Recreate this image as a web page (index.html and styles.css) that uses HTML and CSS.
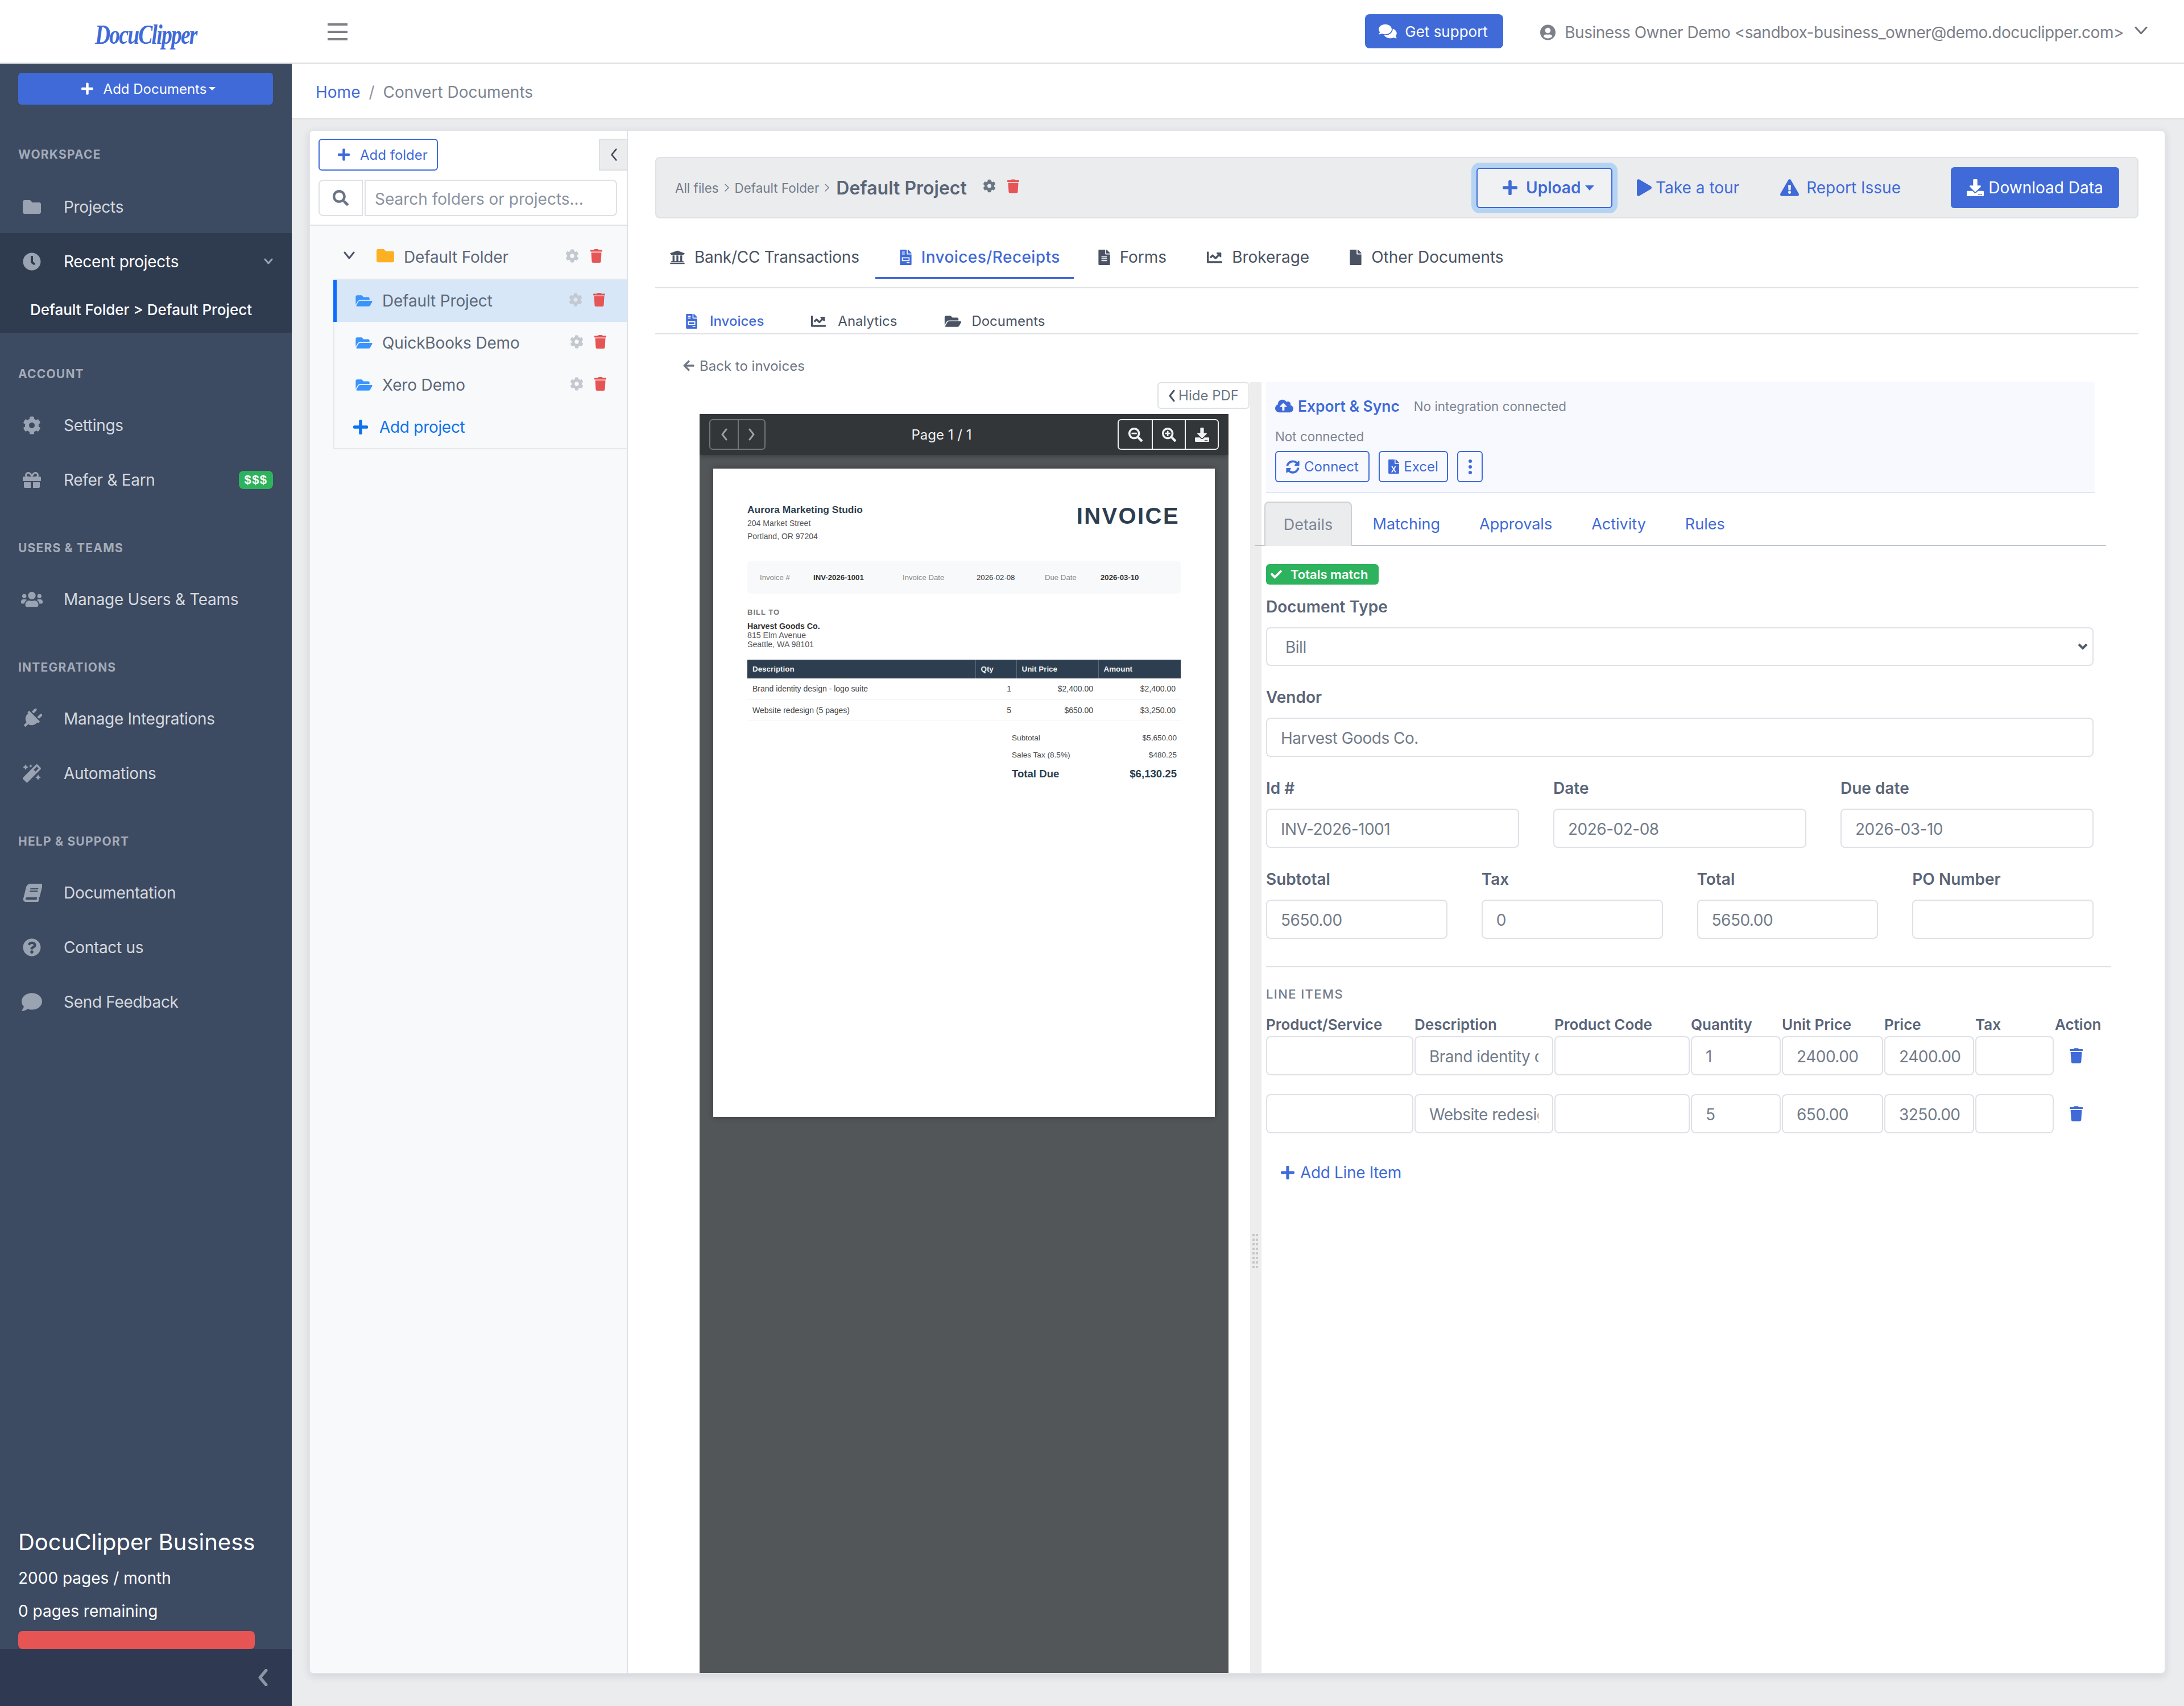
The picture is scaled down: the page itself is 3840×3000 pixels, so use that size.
FILE: index.html
```html
<!DOCTYPE html>
<html lang="en">
<head>
    <meta charset="UTF-8">
    <meta name="viewport" content="width=device-width, initial-scale=1.0">
    <title>DocuClipper - Convert Documents</title>
    <link rel="stylesheet" href="styles.css">
</head>
<body>
    <svg class="sprite" xmlns="http://www.w3.org/2000/svg">
        <symbol id="i-folder" viewBox="0 0 512 512"><path d="M464 128H272l-64-64H48C21.49 64 0 85.49 0 112v288c0 26.51 21.49 48 48 48h416c26.51 0 48-21.49 48-48V176c0-26.51-21.49-48-48-48z"/></symbol>
        <symbol id="i-folder-open" viewBox="0 0 576 512"><path d="M572.694 292.093L500.27 416.248A63.997 63.997 0 0 1 444.989 448H45.025c-18.523 0-30.064-20.093-20.731-36.093l72.424-124.155A64 64 0 0 1 152 256h399.964c18.523 0 30.064 20.093 20.73 36.093zM152 224h328v-48c0-26.51-21.49-48-48-48H272l-64-64H48C21.49 64 0 85.49 0 112v278.046l69.077-118.418C86.214 242.25 117.989 224 152 224z"/></symbol>
        <symbol id="i-trash" viewBox="0 0 448 512"><path d="M432 32H312l-9.4-18.7A24 24 0 0 0 281.1 0H166.8a23.72 23.72 0 0 0-21.4 13.3L136 32H16A16 16 0 0 0 0 48v32a16 16 0 0 0 16 16h416a16 16 0 0 0 16-16V48a16 16 0 0 0-16-16zM53.2 467a48 48 0 0 0 47.9 45h245.8a48 48 0 0 0 47.9-45L416 128H32z"/></symbol>
        <symbol id="i-cog" viewBox="0 0 512 512"><path d="M487.4 315.7l-42.6-24.6c4.3-23.2 4.3-47 0-70.2l42.6-24.6c4.9-2.8 7.1-8.6 5.5-14-11.1-35.6-30-67.8-54.7-94.6-3.8-4.1-10-5.1-14.8-2.3L380.8 110c-17.9-15.4-38.5-27.3-60.8-35.1V25.8c0-5.6-3.9-10.5-9.4-11.7-36.7-8.2-74.3-7.8-109.2 0-5.5 1.2-9.4 6.1-9.4 11.7V75c-22.2 7.9-42.8 19.8-60.8 35.1L88.7 85.5c-4.9-2.8-11-1.9-14.8 2.3-24.7 26.7-43.6 58.9-54.7 94.6-1.7 5.4.6 11.2 5.5 14L67.3 221c-4.3 23.2-4.3 47 0 70.2l-42.6 24.6c-4.9 2.8-7.1 8.6-5.5 14 11.1 35.6 30 67.8 54.7 94.6 3.8 4.1 10 5.1 14.8 2.3l42.6-24.6c17.9 15.4 38.5 27.3 60.8 35.1v49.2c0 5.6 3.9 10.5 9.4 11.7 36.7 8.2 74.3 7.8 109.2 0 5.5-1.2 9.4-6.1 9.4-11.7v-49.2c22.2-7.9 42.8-19.8 60.8-35.1l42.6 24.6c4.9 2.8 11 1.9 14.8-2.3 24.7-26.7 43.6-58.9 54.7-94.6 1.5-5.5-.7-11.3-5.6-14.1zM256 336c-44.1 0-80-35.9-80-80s35.9-80 80-80 80 35.9 80 80-35.9 80-80 80z"/></symbol>
        <symbol id="i-search" viewBox="0 0 512 512"><path d="M505 442.7L405.3 343c-4.5-4.5-10.6-7-17-7H372c27.6-35.3 44-79.7 44-128C416 93.1 322.9 0 208 0S0 93.1 0 208s93.1 208 208 208c48.3 0 92.7-16.4 128-44v16.3c0 6.4 2.5 12.5 7 17l99.7 99.7c9.4 9.4 24.6 9.4 33.9 0l28.3-28.3c9.4-9.4 9.4-24.6.1-34zM208 336c-70.7 0-128-57.2-128-128 0-70.7 57.2-128 128-128 70.7 0 128 57.2 128 128 0 70.7-57.2 128-128 128z"/></symbol>
        <symbol id="i-plus" viewBox="0 0 448 512"><path d="M416 208H272V64c0-17.67-14.33-32-32-32h-32c-17.67 0-32 14.33-32 32v144H32c-17.67 0-32 14.33-32 32v32c0 17.67 14.33 32 32 32h144v144c0 17.67 14.33 32 32 32h32c17.67 0 32-14.33 32-32V304h144c17.67 0 32-14.33 32-32v-32c0-17.67-14.33-32-32-32z"/></symbol>
        <symbol id="i-file" viewBox="0 0 384 512"><path d="M224 136V0H24C10.7 0 0 10.7 0 24v464c0 13.3 10.7 24 24 24h336c13.3 0 24-10.7 24-24V160H248c-13.2 0-24-10.8-24-24zm160-14.1v6.1H256V0h6.1c6.4 0 12.5 2.5 17 7l97.9 98c4.5 4.5 7 10.6 7 16.9z"/></symbol>
        <symbol id="i-file-alt" viewBox="0 0 384 512"><path d="M224 136V0H24C10.7 0 0 10.7 0 24v464c0 13.3 10.7 24 24 24h336c13.3 0 24-10.7 24-24V160H248c-13.2 0-24-10.8-24-24zm64 236c0 6.6-5.4 12-12 12H108c-6.6 0-12-5.4-12-12v-8c0-6.6 5.4-12 12-12h168c6.6 0 12 5.4 12 12v8zm0-64c0 6.6-5.4 12-12 12H108c-6.6 0-12-5.4-12-12v-8c0-6.6 5.4-12 12-12h168c6.6 0 12 5.4 12 12v8zm0-72v8c0 6.6-5.4 12-12 12H108c-6.6 0-12-5.4-12-12v-8c0-6.6 5.4-12 12-12h168c6.6 0 12 5.4 12 12zm96-114.1v6.1H256V0h6.1c6.4 0 12.5 2.5 17 7l97.9 98c4.5 4.5 7 10.6 7 16.9z"/></symbol>
        <symbol id="i-file-invoice" viewBox="0 0 384 512"><path fill-rule="evenodd" d="M224 136V0H24C10.7 0 0 10.7 0 24v464c0 13.3 10.7 24 24 24h336c13.3 0 24-10.7 24-24V160H248c-13.2 0-24-10.8-24-24zM64 64h96v32H64zm0 64h96v32H64zm0 128h256v128H64zm32 32v64h192v-64zM224 416h96v32h-96zM384 121.9v6.1H256V0h6.1c6.4 0 12.5 2.5 17 7l97.9 98c4.5 4.5 7 10.6 7 16.9z"/></symbol>
        <symbol id="i-file-excel" viewBox="0 0 384 512"><path fill-rule="evenodd" d="M224 136V0H24C10.7 0 0 10.7 0 24v464c0 13.3 10.7 24 24 24h336c13.3 0 24-10.7 24-24V160H248c-13.2 0-24-10.8-24-24zm60 100h-46l-46 78-46-78h-46l68 112-68 112h46l46-78 46 78h46l-68-112zM384 121.9v6.1H256V0h6.1c6.4 0 12.5 2.5 17 7l97.9 98c4.5 4.5 7 10.6 7 16.9z"/></symbol>
        <symbol id="i-chart" viewBox="0 0 512 512"><path d="M496 384H64V80c0-8.84-7.16-16-16-16H16C7.16 64 0 71.16 0 80v336c0 17.67 14.33 32 32 32h464c8.84 0 16-7.16 16-16v-32c0-8.84-7.16-16-16-16zM464 96H345.94c-21.38 0-32.09 25.85-16.97 40.97l32.4 32.4L288 242.75l-73.37-73.37c-12.5-12.5-32.76-12.5-45.25 0l-68.69 68.69c-6.25 6.25-6.25 16.38 0 22.63l22.62 22.62c6.25 6.25 16.38 6.25 22.63 0L192 237.25l73.37 73.37c12.5 12.5 32.76 12.5 45.25 0l96-96 32.4 32.4c15.12 15.12 40.97 4.41 40.97-16.97V112c.01-8.84-7.15-16-15.99-16z"/></symbol>
        <symbol id="i-bank" viewBox="0 0 512 512"><path d="M496 128v16a8 8 0 0 1-8 8h-24v12c0 6.627-5.373 12-12 12H60c-6.627 0-12-5.373-12-12v-12H24a8 8 0 0 1-8-8v-16a8 8 0 0 1 4.941-7.392l232-88a7.996 7.996 0 0 1 6.118 0l232 88A8 8 0 0 1 496 128zm-24 304H40c-13.255 0-24 10.745-24 24v16a8 8 0 0 0 8 8h464a8 8 0 0 0 8-8v-16c0-13.255-10.745-24-24-24zM96 192v192H60c-6.627 0-12 5.373-12 12v20h416v-20c0-6.627-5.373-12-12-12h-36V192h-64v192h-64V192h-64v192h-64V192H96z"/></symbol>
        <symbol id="i-clock" viewBox="0 0 512 512"><path d="M256,8C119,8,8,119,8,256S119,504,256,504,504,393,504,256,393,8,256,8Zm92.49,313h0l-20,25a16,16,0,0,1-22.49,2.5h0l-67-49.72a40,40,0,0,1-15-31.23V112a16,16,0,0,1,16-16h32a16,16,0,0,1,16,16V256l58,42.5A16,16,0,0,1,348.49,321Z"/></symbol>
        <symbol id="i-question" viewBox="0 0 512 512"><path d="M504 256c0 136.997-111.043 248-248 248S8 392.997 8 256C8 119.083 119.043 8 256 8s248 111.083 248 248zM262.655 90c-54.497 0-89.255 22.957-116.549 63.758-3.536 5.286-2.353 12.415 2.715 16.258l34.699 26.31c5.205 3.947 12.621 3.008 16.665-2.122 17.864-22.658 30.113-35.797 57.303-35.797 20.429 0 45.698 13.148 45.698 32.958 0 14.976-12.363 22.667-32.534 33.976C247.128 238.528 216 254.941 216 296v4c0 6.627 5.373 12 12 12h56c6.627 0 12-5.373 12-12v-1.333c0-28.462 83.186-29.647 83.186-106.667 0-58.002-60.165-102-116.531-102zM256 338c-25.365 0-46 20.635-46 46 0 25.364 20.635 46 46 46s46-20.636 46-46c0-25.365-20.635-46-46-46z"/></symbol>
        <symbol id="i-comment" viewBox="0 0 512 512"><path d="M256 32C114.6 32 0 125.1 0 240c0 49.6 21.4 95 57 130.7C44.5 421.1 2.7 466 2.2 466.5c-2.2 2.3-2.8 5.7-1.5 8.7S4.8 480 8 480c66.3 0 116-31.8 140.6-51.4 32.7 12.3 69 19.4 107.4 19.4 141.4 0 256-93.1 256-208S397.4 32 256 32z"/></symbol>
        <symbol id="i-comments" viewBox="0 0 576 512"><path d="M416 192c0-88.4-93.1-160-208-160S0 103.6 0 192c0 34.3 14.1 65.9 38 92-13.4 30.2-35.5 54.2-35.8 54.5-2.2 2.3-2.8 5.7-1.5 8.7S4.8 352 8 352c36.6 0 66.9-12.3 88.7-25 32.2 15.7 70.3 25 111.3 25 114.9 0 208-71.6 208-160zm122 220c23.9-26 38-57.7 38-92 0-66.9-53.5-124.2-129.3-148.1.9 6.6 1.3 13.3 1.3 20.1 0 105.9-107.7 192-240 192-10.8 0-21.3-.8-31.7-1.9C207.8 439.6 281.8 480 368 480c41 0 79.1-9.2 111.3-25 21.8 12.7 52.1 25 88.7 25 3.2 0 6.1-1.9 7.3-4.8 1.3-2.9.7-6.3-1.5-8.7-.3-.3-22.4-24.2-35.8-54.5z"/></symbol>
        <symbol id="i-check" viewBox="0 0 512 512"><path d="M173.898 439.404l-166.4-166.4c-9.997-9.997-9.997-26.206 0-36.204l36.203-36.204c9.997-9.998 26.207-9.998 36.204 0L192 312.69 432.095 72.596c9.997-9.997 26.207-9.997 36.204 0l36.203 36.204c9.997 9.997 9.997 26.206 0 36.204l-294.4 294.401c-9.998 9.997-26.207 9.997-36.204-.001z"/></symbol>
        <symbol id="i-user" viewBox="0 0 496 512"><path d="M248 8C111 8 0 119 0 256s111 248 248 248 248-111 248-248S385 8 248 8zm0 96c48.6 0 88 39.4 88 88s-39.4 88-88 88-88-39.4-88-88 39.4-88 88-88zm0 344c-58.7 0-111.3-26.6-146.5-68.2 18.8-35.4 55.6-59.8 98.5-59.8 2.4 0 4.8.4 7.1 1.1 13 4.2 26.6 6.9 40.9 6.9 14.3 0 28-2.7 40.9-6.9 2.3-.7 4.7-1.1 7.1-1.1 42.9 0 79.7 24.4 98.5 59.8C359.3 421.4 306.7 448 248 448z"/></symbol>
        <symbol id="i-download" viewBox="0 0 512 512"><path d="M216 0h80c13.3 0 24 10.7 24 24v168h87.7c17.8 0 26.7 21.5 14.1 34.1L269.7 378.3c-7.5 7.5-19.8 7.5-27.3 0L90.1 226.1c-12.6-12.6-3.7-34.1 14.1-34.1H192V24c0-13.3 10.7-24 24-24zm296 376v112c0 13.3-10.7 24-24 24H24c-13.3 0-24-10.7-24-24V376c0-13.3 10.7-24 24-24h146.7l49 49c20.1 20.1 52.5 20.1 72.6 0l49-49H488c13.3 0 24 10.7 24 24zm-124 88c0-11-9-20-20-20s-20 9-20 20 9 20 20 20 20-9 20-20zm64 0c0-11-9-20-20-20s-20 9-20 20 9 20 20 20 20-9 20-20z"/></symbol>
        <symbol id="i-warning" viewBox="0 0 576 512"><path d="M569.517 440.013C587.975 472.007 564.806 512 527.94 512H48.054c-36.937 0-59.999-40.055-41.577-71.987L246.423 24c18.467-32.009 64.72-31.951 83.154 0l239.94 416.013zM288 354c-25.405 0-46 20.595-46 46s20.595 46 46 46 46-20.595 46-46-20.595-46-46-46zm-43.673-165.346l7.418 136c.347 6.364 5.609 11.346 11.982 11.346h48.546c6.373 0 11.635-4.982 11.982-11.346l7.418-136c.375-6.874-5.098-12.654-11.982-12.654h-63.383c-6.884 0-12.356 5.78-11.981 12.654z"/></symbol>
        <symbol id="i-play" viewBox="0 0 448 512"><path d="M424.4 214.7L72.4 6.6C43.8-10.3 0 6.1 0 47.9V464c0 37.5 40.7 60.1 72.4 41.3l352-208c31.4-18.5 31.5-64.1 0-82.6z"/></symbol>
        <symbol id="i-cloud" viewBox="0 0 640 512"><path d="M537.6 226.6c4.1-10.7 6.4-22.4 6.4-34.6 0-53-43-96-96-96-19.7 0-38.1 6-53.3 16.2C367 64.2 315.3 32 256 32c-88.4 0-160 71.6-160 160 0 2.7.1 5.4.2 8.1C40.2 219.8 0 273.2 0 336c0 79.5 64.5 144 144 144h368c70.7 0 128-57.3 128-128 0-61.9-44-113.6-102.4-125.4zM393.4 288H328v112c0 8.8-7.2 16-16 16h-48c-8.8 0-16-7.2-16-16V288h-65.4c-14.3 0-21.4-17.2-11.3-27.3l105.4-105.4c6.2-6.2 16.4-6.2 22.6 0l105.4 105.4c10.1 10.1 2.9 27.3-11.3 27.3z"/></symbol>
        <symbol id="i-sync" viewBox="0 0 512 512"><path d="M370.72 133.28C339.458 104.008 298.888 87.962 255.848 88c-77.458.068-144.328 53.178-162.791 126.85-1.344 5.363-6.122 9.15-11.651 9.15H24.103c-7.498 0-13.194-6.807-11.807-14.176C33.933 94.924 134.813 8 256 8c66.448 0 126.791 26.136 171.315 68.685L463.03 40.97C478.149 25.851 504 36.559 504 57.941V192c0 13.255-10.745 24-24 24H345.941c-21.382 0-32.09-25.851-16.971-40.971l41.75-41.749zM32 296h134.059c21.382 0 32.09 25.851 16.971 40.971l-41.75 41.75c31.262 29.273 71.835 45.319 114.876 45.28 77.418-.07 144.315-53.144 162.787-126.849 1.344-5.363 6.122-9.15 11.651-9.15h57.304c7.498 0 13.194 6.807 11.807 14.176C478.067 417.076 377.187 504 256 504c-66.448 0-126.791-26.136-171.315-68.685L48.97 471.03C33.851 486.149 8 475.441 8 454.059V320c0-13.255 10.745-24 24-24z"/></symbol>
        <symbol id="i-gift" viewBox="0 0 512 512"><path d="M32 448c0 17.7 14.3 32 32 32h160V320H32v128zm256 32h160c17.7 0 32-14.3 32-32V320H288v160zm192-320h-42.1c6.2-12.1 10.1-25.5 10.1-40 0-48.5-39.5-88-88-88-41.6 0-68.5 21.3-103 68.3-34.5-47-61.4-68.3-103-68.3-48.5 0-88 39.5-88 88 0 14.5 3.8 27.9 10.1 40H32c-17.7 0-32 14.3-32 32v80c0 8.8 7.2 16 16 16h480c8.8 0 16-7.2 16-16v-80c0-17.7-14.3-32-32-32zm-326.1 0c-22.1 0-40-17.9-40-40s17.9-40 40-40c19.9 0 34.6 3.3 86.1 80h-86.1zm206.1 0h-86.1c51.4-76.5 65.7-80 86.1-80 22.1 0 40 17.9 40 40s-17.9 40-40 40z"/></symbol>
        <symbol id="i-users" viewBox="0 0 640 512"><path d="M96 224c35.3 0 64-28.7 64-64s-28.7-64-64-64-64 28.7-64 64 28.7 64 64 64zm448 0c35.3 0 64-28.7 64-64s-28.7-64-64-64-64 28.7-64 64 28.7 64 64 64zm32 32h-64c-17.6 0-33.5 7.1-45.1 18.6 40.3 22.1 68.9 62 75.1 109.4h66c17.7 0 32-14.3 32-32v-32c0-35.3-28.7-64-64-64zm-256 0c61.9 0 112-50.1 112-112S381.9 32 320 32 208 82.1 208 144s50.1 112 112 112zm76.8 32h-8.3c-20.8 10-43.9 16-68.5 16s-47.6-6-68.5-16h-8.3C179.6 288 128 339.6 128 403.2V432c0 26.5 21.5 48 48 48h288c26.5 0 48-21.5 48-48v-28.8c0-63.6-51.6-115.2-115.2-115.2zm-223.7-13.4C161.5 263.1 145.6 256 128 256H64c-35.3 0-64 28.7-64 64v32c0 17.7 14.3 32 32 32h65.9c6.3-47.4 34.9-87.3 75.2-109.4z"/></symbol>
        <symbol id="i-plug" viewBox="0 0 512 512"><g transform="rotate(45 256 256) translate(64 0)"><path d="M320,32a32,32,0,0,0-64,0v96h64Zm48,128H16A16,16,0,0,0,0,176v32a16,16,0,0,0,16,16H32v32A160.07,160.07,0,0,0,160,412.8V512h64V412.8A160.07,160.07,0,0,0,352,256V224h16a16,16,0,0,0,16-16V176A16,16,0,0,0,368,160ZM128,32a32,32,0,0,0-64,0v96h64Z"/></g></symbol>
        <symbol id="i-magic" viewBox="0 0 512 512"><path d="M224 96l16-32 32-16-32-16-16-32-16 32-32 16 32 16 16 32zM80 160l26.66-53.33L160 80l-53.34-26.67L80 0 53.34 53.33 0 80l53.34 26.67L80 160zm352 128l-26.66 53.33L352 368l53.34 26.67L432 448l26.66-53.33L512 368l-53.34-26.67L432 288zm70.62-193.77L417.77 9.38C411.53 3.12 403.34 0 395.15 0c-8.19 0-16.38 3.12-22.63 9.38L9.38 372.52c-12.5 12.5-12.5 32.76 0 45.25l84.85 84.85c6.25 6.25 14.44 9.37 22.62 9.37 8.19 0 16.38-3.12 22.63-9.37l363.14-363.15c12.5-12.48 12.5-32.75 0-45.24zM359.45 203.46l-50.91-50.91 86.6-86.6 50.91 50.91-86.6 86.6z"/></symbol>
        <symbol id="i-book" viewBox="0 0 512 512"><g transform="translate(120 0) skewX(-14)"><path d="M448 360V24c0-13.3-10.7-24-24-24H96C43 0 0 43 0 96v320c0 53 43 96 96 96h328c13.3 0 24-10.7 24-24v-16c0-7.5-3.5-14.3-8.9-18.7-4.2-15.4-4.2-59.3 0-74.7 5.4-4.3 8.9-11.1 8.9-18.6zM128 134c0-3.3 2.7-6 6-6h212c3.3 0 6 2.7 6 6v20c0 3.3-2.7 6-6 6H134c-3.3 0-6-2.7-6-6v-20zm0 64c0-3.3 2.7-6 6-6h212c3.3 0 6 2.7 6 6v20c0 3.3-2.7 6-6 6H134c-3.3 0-6-2.7-6-6v-20zm253.4 250H96c-17.7 0-32-14.3-32-32 0-17.6 14.4-32 32-32h285.4c-1.9 17.1-1.9 46.9 0 64z"/></g></symbol>
        <symbol id="i-arrow-left" viewBox="0 0 448 512"><path d="M257.5 445.1l-22.2 22.2c-9.4 9.4-24.6 9.4-33.9 0L7 273c-9.4-9.4-9.4-24.6 0-33.9L201.4 44.7c9.4-9.4 24.6-9.4 33.9 0l22.2 22.2c9.5 9.5 9.3 25-.4 34.3L136.6 216H424c13.3 0 24 10.7 24 24v32c0 13.3-10.7 24-24 24H136.6l120.5 114.8c9.8 9.3 10 24.8.4 34.3z"/></symbol>
        <symbol id="i-zoom-out" viewBox="0 0 512 512"><path d="M304 192v32c0 6.6-5.4 12-12 12H124c-6.6 0-12-5.4-12-12v-32c0-6.6 5.4-12 12-12h168c6.6 0 12 5.4 12 12zm201 284.7L476.7 505c-9.4 9.4-24.6 9.4-33.9 0L343 405.3c-4.5-4.5-7-10.6-7-17V372c-35.3 27.6-79.7 44-128 44C93.1 416 0 322.9 0 208S93.1 0 208 0s208 93.1 208 208c0 48.3-16.4 92.7-44 128h16.3c6.4 0 12.5 2.5 17 7l99.7 99.7c9.3 9.4 9.3 24.6 0 34zM344 208c0-75.2-60.8-136-136-136S72 132.8 72 208s60.8 136 136 136 136-60.8 136-136z"/></symbol>
        <symbol id="i-zoom-in" viewBox="0 0 512 512"><path d="M304 192v32c0 6.6-5.4 12-12 12h-56v56c0 6.6-5.4 12-12 12h-32c-6.6 0-12-5.4-12-12v-56h-56c-6.6 0-12-5.4-12-12v-32c0-6.6 5.4-12 12-12h56v-56c0-6.6 5.4-12 12-12h32c6.6 0 12 5.4 12 12v56h56c6.6 0 12 5.4 12 12zm201 284.7L476.7 505c-9.4 9.4-24.6 9.4-33.9 0L343 405.3c-4.5-4.5-7-10.6-7-17V372c-35.3 27.6-79.7 44-128 44C93.1 416 0 322.9 0 208S93.1 0 208 0s208 93.1 208 208c0 48.3-16.4 92.7-44 128h16.3c6.4 0 12.5 2.5 17 7l99.7 99.7c9.3 9.4 9.3 24.6 0 34zM344 208c0-75.2-60.8-136-136-136S72 132.8 72 208s60.8 136 136 136 136-60.8 136-136z"/></symbol>
    </svg>

    <header class="topbar">
        <div class="logo-box"><span class="logo">DocuClipper</span></div>
        <div class="hamburger"><span></span><span></span><span></span></div>
        <div class="topbar-right">
            <a class="btn-support"><svg class="icon-support"><use href="#i-comments"/></svg>Get support</a>
            <div class="user-menu">
                <svg class="icon-user"><use href="#i-user"/></svg>
                <span>Business Owner Demo &lt;sandbox-business_owner@demo.docuclipper.com&gt;</span>
                <svg class="chev-user" viewBox="0 0 24 16"><polyline points="2,2 12,13 22,2"/></svg>
            </div>
        </div>
    </header>

    <div class="layout">
        <aside class="sidebar">
            <a class="btn-add-docs"><svg class="icon-plus-sm"><use href="#i-plus"/></svg>Add Documents<span class="caret"></span></a>

            <div class="side-label side-label-first">WORKSPACE</div>
            <a class="side-item side-item-first"><svg class="side-icon"><use href="#i-folder"/></svg>Projects</a>
            <div class="side-recent">
                <a class="side-item side-item-open"><svg class="side-icon"><use href="#i-clock"/></svg>Recent projects
                    <svg class="side-chev" viewBox="0 0 16 12"><polyline points="2,2 8,9 14,2"/></svg>
                </a>
                <div class="side-sub">Default Folder &gt; Default Project</div>
            </div>

            <div class="side-label">ACCOUNT</div>
            <a class="side-item"><svg class="side-icon"><use href="#i-cog"/></svg>Settings</a>
            <a class="side-item"><svg class="side-icon"><use href="#i-gift"/></svg>Refer &amp; Earn<span class="badge-money">$$$</span></a>

            <div class="side-label">USERS &amp; TEAMS</div>
            <a class="side-item"><svg class="side-icon side-icon-lg"><use href="#i-users"/></svg>Manage Users &amp; Teams</a>

            <div class="side-label">INTEGRATIONS</div>
            <a class="side-item"><svg class="side-icon side-icon-lg"><use href="#i-plug"/></svg>Manage Integrations</a>
            <a class="side-item"><svg class="side-icon"><use href="#i-magic"/></svg>Automations</a>

            <div class="side-label">HELP &amp; SUPPORT</div>
            <a class="side-item"><svg class="side-icon"><use href="#i-book"/></svg>Documentation</a>
            <a class="side-item"><svg class="side-icon"><use href="#i-question"/></svg>Contact us</a>
            <a class="side-item"><svg class="side-icon side-icon-lg"><use href="#i-comment"/></svg>Send Feedback</a>

            <div class="plan">
                <div class="plan-name">DocuClipper Business</div>
                <div class="plan-pages">2000 pages / month</div>
                <div class="plan-left">0 pages remaining</div>
                <div class="plan-bar"></div>
            </div>
            <div class="side-footer">
                <svg class="side-collapse" viewBox="0 0 16 28"><polyline points="13,2 3,14 13,26"/></svg>
            </div>
        </aside>

        <main class="main">
            <nav class="crumbs"><a class="crumb-link">Home</a><span class="crumb-sep">/</span><span>Convert Documents</span></nav>

            <section class="card">
                <div class="tree-pane">
                    <div class="tree-head">
                        <div class="tree-actions">
                            <a class="btn-add-folder"><svg class="icon-plus-sm"><use href="#i-plus"/></svg>Add folder</a>
                            <a class="btn-collapse"><svg viewBox="0 0 16 28"><polyline points="13,3 4,14 13,25"/></svg></a>
                        </div>
                        <div class="search-group">
                            <span class="search-addon"><svg><use href="#i-search"/></svg></span>
                            <input class="search-input" type="text" placeholder="Search folders or projects...">
                        </div>
                    </div>
                    <div class="tree-body">
                        <div class="tree-folder">
                            <svg class="tree-chev" viewBox="0 0 20 14"><polyline points="2,2 10,12 18,2"/></svg>
                            <svg class="tree-folder-icon"><use href="#i-folder"/></svg>
                            <span class="tree-name">Default Folder</span>
                            <svg class="tree-gear"><use href="#i-cog"/></svg>
                            <svg class="tree-trash"><use href="#i-trash"/></svg>
                        </div>
                        <div class="tree-list">
                            <div class="tree-row tree-row-active">
                                <svg class="tree-open-icon"><use href="#i-folder-open"/></svg>
                                <span class="tree-name">Default Project</span>
                                <svg class="tree-gear"><use href="#i-cog"/></svg>
                                <svg class="tree-trash"><use href="#i-trash"/></svg>
                            </div>
                            <div class="tree-row">
                                <svg class="tree-open-icon"><use href="#i-folder-open"/></svg>
                                <span class="tree-name">QuickBooks Demo</span>
                                <svg class="tree-gear"><use href="#i-cog"/></svg>
                                <svg class="tree-trash"><use href="#i-trash"/></svg>
                            </div>
                            <div class="tree-row">
                                <svg class="tree-open-icon"><use href="#i-folder-open"/></svg>
                                <span class="tree-name">Xero Demo</span>
                                <svg class="tree-gear"><use href="#i-cog"/></svg>
                                <svg class="tree-trash"><use href="#i-trash"/></svg>
                            </div>
                            <div class="tree-row tree-add"><svg class="tree-add-icon"><use href="#i-plus"/></svg>Add project</div>
                        </div>
                    </div>
                </div>

                <div class="work-pane">
                    <div class="project-bar">
                        <span class="path">All files</span>
                        <svg class="path-sep" viewBox="0 0 8 14"><polyline points="1,1 7,7 1,13"/></svg>
                        <span class="path">Default Folder</span>
                        <svg class="path-sep" viewBox="0 0 8 14"><polyline points="1,1 7,7 1,13"/></svg>
                        <span class="project-name">Default Project</span>
                        <svg class="project-gear"><use href="#i-cog"/></svg>
                        <svg class="project-trash"><use href="#i-trash"/></svg>
                        <a class="btn-upload"><svg class="icon-plus-md"><use href="#i-plus"/></svg>Upload<span class="caret"></span></a>
                        <a class="bar-link bar-tour"><svg class="icon-play"><use href="#i-play"/></svg>Take a tour</a>
                        <a class="bar-link bar-report"><svg class="icon-warn"><use href="#i-warning"/></svg>Report Issue</a>
                        <a class="btn-download"><svg class="icon-dl"><use href="#i-download"/></svg>Download Data</a>
                    </div>

                    <div class="tabs">
                        <a class="tab tab-first"><svg class="tab-icon icon-bank"><use href="#i-bank"/></svg>Bank/CC Transactions</a>
                        <a class="tab tab-active"><svg class="tab-icon icon-file"><use href="#i-file-invoice"/></svg>Invoices/Receipts</a>
                        <a class="tab"><svg class="tab-icon icon-file"><use href="#i-file-alt"/></svg>Forms</a>
                        <a class="tab"><svg class="tab-icon icon-chart"><use href="#i-chart"/></svg>Brokerage</a>
                        <a class="tab"><svg class="tab-icon icon-file"><use href="#i-file"/></svg>Other Documents</a>
                    </div>

                    <div class="subtabs">
                        <a class="subtab subtab-active"><svg class="sub-file"><use href="#i-file-invoice"/></svg>Invoices</a>
                        <a class="subtab"><svg class="sub-chart"><use href="#i-chart"/></svg>Analytics</a>
                        <a class="subtab"><svg class="sub-folder"><use href="#i-folder-open"/></svg>Documents</a>
                    </div>

                    <a class="back-link"><svg><use href="#i-arrow-left"/></svg>Back to invoices</a>

                    <div class="split">
                        <div class="pdf-col">
                            <a class="btn-hide-pdf"><svg viewBox="0 0 12 22"><polyline points="10,2 3,11 10,20"/></svg>Hide PDF</a>
                            <div class="pdf-viewer">
                                <div class="pdf-toolbar">
                                    <div class="pdf-nav">
                                        <span class="pdf-nav-btn"><svg viewBox="0 0 12 22"><polyline points="10,2 3,11 10,20"/></svg></span>
                                        <span class="pdf-nav-btn"><svg viewBox="0 0 12 22"><polyline points="2,2 9,11 2,20"/></svg></span>
                                    </div>
                                    <div class="pdf-page-no">Page 1 / 1</div>
                                    <div class="pdf-tools">
                                        <span class="pdf-tool"><svg><use href="#i-zoom-out"/></svg></span>
                                        <span class="pdf-tool"><svg><use href="#i-zoom-in"/></svg></span>
                                        <span class="pdf-tool"><svg><use href="#i-download"/></svg></span>
                                    </div>
                                </div>
                                <div class="pdf-page">
                                    <div class="inv-head">
                                        <div>
                                            <div class="inv-company">Aurora Marketing Studio</div>
                                            <div class="inv-address">204 Market Street</div>
                                            <div class="inv-address">Portland, OR 97204</div>
                                        </div>
                                        <div class="inv-title">INVOICE</div>
                                    </div>
                                    <div class="inv-meta">
                                        <span class="inv-meta-label">Invoice #</span><strong>INV-2026-1001</strong>
                                        <span class="inv-meta-label">Invoice Date</span><span>2026-02-08</span>
                                        <span class="inv-meta-label">Due Date</span><strong>2026-03-10</strong>
                                    </div>
                                    <div class="inv-billto">BILL TO</div>
                                    <div class="inv-client"><strong>Harvest Goods Co.</strong><br>815 Elm Avenue<br>Seattle, WA 98101</div>
                                    <table class="inv-table">
                                        <thead>
                                            <tr><th class="col-desc">Description</th><th class="col-qty">Qty</th><th class="col-unit">Unit Price</th><th>Amount</th></tr>
                                        </thead>
                                        <tbody>
                                            <tr><td>Brand identity design - logo suite</td><td class="num">1</td><td class="num">$2,400.00</td><td class="num">$2,400.00</td></tr>
                                            <tr><td>Website redesign (5 pages)</td><td class="num">5</td><td class="num">$650.00</td><td class="num">$3,250.00</td></tr>
                                        </tbody>
                                    </table>
                                    <div class="inv-totals">
                                        <div class="inv-total-row"><span>Subtotal</span><span>$5,650.00</span></div>
                                        <div class="inv-total-row"><span>Sales Tax (8.5%)</span><span>$480.25</span></div>
                                        <div class="inv-total-row inv-total-due"><span>Total Due</span><span>$6,130.25</span></div>
                                    </div>
                                </div>
                            </div>
                        </div>

                        <div class="splitter"><div class="splitter-grip"></div></div>

                        <div class="detail-col">
                            <div class="export-box">
                                <div class="export-title">
                                    <svg class="icon-cloud"><use href="#i-cloud"/></svg>
                                    <strong>Export &amp; Sync</strong>
                                    <span class="export-note">No integration connected</span>
                                </div>
                                <div class="export-status">Not connected</div>
                                <div class="export-actions">
                                    <a class="btn-outline btn-connect"><svg class="icon-sync"><use href="#i-sync"/></svg>Connect</a>
                                    <a class="btn-outline btn-excel"><svg class="icon-excel"><use href="#i-file-excel"/></svg>Excel</a>
                                    <a class="btn-outline btn-more"><span></span><span></span><span></span></a>
                                </div>
                            </div>

                            <div class="detail-tabs">
                                <a class="detail-tab detail-tab-active">Details</a>
                                <a class="detail-tab">Matching</a>
                                <a class="detail-tab">Approvals</a>
                                <a class="detail-tab">Activity</a>
                                <a class="detail-tab">Rules</a>
                            </div>

                            <form class="detail-form">
                                <div class="badge-match"><svg><use href="#i-check"/></svg>Totals match</div>

                                <label class="field-label field-label-first">Document Type</label>
                                <select class="field"><option>Bill</option></select>

                                <label class="field-label">Vendor</label>
                                <input class="field" type="text" value="Harvest Goods Co.">

                                <div class="field-row field-row-3">
                                    <div><label class="field-label">Id #</label><input class="field" type="text" value="INV-2026-1001"></div>
                                    <div><label class="field-label">Date</label><input class="field" type="text" value="2026-02-08"></div>
                                    <div><label class="field-label">Due date</label><input class="field" type="text" value="2026-03-10"></div>
                                </div>

                                <div class="field-row field-row-4">
                                    <div><label class="field-label">Subtotal</label><input class="field" type="text" value="5650.00"></div>
                                    <div><label class="field-label">Tax</label><input class="field" type="text" value="0"></div>
                                    <div><label class="field-label">Total</label><input class="field" type="text" value="5650.00"></div>
                                    <div><label class="field-label">PO Number</label><input class="field" type="text" value=""></div>
                                </div>

                                <hr class="form-rule">
                                <div class="line-title">LINE ITEMS</div>

                                <div class="line-grid line-head">
                                    <span>Product/Service</span><span>Description</span><span>Product Code</span><span>Quantity</span><span>Unit Price</span><span>Price</span><span>Tax</span><span>Action</span>
                                </div>
                                <div class="line-grid line-row">
                                    <input class="field" type="text" value="">
                                    <input class="field" type="text" value="Brand identity design - logo suite">
                                    <input class="field" type="text" value="">
                                    <input class="field field-num" type="text" value="1">
                                    <input class="field field-num" type="text" value="2400.00">
                                    <input class="field field-num" type="text" value="2400.00">
                                    <input class="field field-num" type="text" value="">
                                    <svg class="line-trash"><use href="#i-trash"/></svg>
                                </div>
                                <div class="line-grid line-row">
                                    <input class="field" type="text" value="">
                                    <input class="field" type="text" value="Website redesign (5 pages)">
                                    <input class="field" type="text" value="">
                                    <input class="field field-num" type="text" value="5">
                                    <input class="field field-num" type="text" value="650.00">
                                    <input class="field field-num" type="text" value="3250.00">
                                    <input class="field field-num" type="text" value="">
                                    <svg class="line-trash"><use href="#i-trash"/></svg>
                                </div>
                                <a class="add-line"><svg><use href="#i-plus"/></svg>Add Line Item</a>
                            </form>
                        </div>
                    </div>
                </div>
            </section>
        </main>
    </div>
</body>
</html>
```

FILE: styles.css
```css
* {
    margin: 0;
    padding: 0;
    box-sizing: border-box;
}

body {
    width: 3840px;
    height: 3000px;
    overflow: hidden;
    font-family: "Inter", "Liberation Sans", sans-serif;
    font-size: 28px;
    color: #495363;
    background: #ebecee;
}

svg {
    fill: currentColor;
    flex: none;
}

svg polyline {
    fill: none;
    stroke: currentColor;
    stroke-width: 3;
    stroke-linecap: round;
    stroke-linejoin: round;
}

.sprite {
    display: none;
}

.caret {
    display: inline-block;
    margin-left: 8px;
    border-top: 9px solid currentColor;
    border-left: 8px solid transparent;
    border-right: 8px solid transparent;
    vertical-align: middle;
}

/* top bar */
.topbar {
    height: 112px;
    display: flex;
    align-items: center;
    padding: 3px 64px 0 0;
    background: #fff;
    border-bottom: 2px solid #dcdfe3;
}

.logo-box {
    width: 513px;
    padding: 7px 0 0 167px;
}

.logo {
    display: inline-block;
    font-family: "Liberation Serif", serif;
    font-style: italic;
    font-weight: 700;
    font-size: 48px;
    letter-spacing: -2.2px;
    color: #3f6ad8;
    transform: scaleX(0.78);
    transform-origin: left center;
}

.hamburger {
    margin-left: 63px;
    width: 35px;
    display: flex;
    flex-direction: column;
    gap: 9px;
    margin-top: -2px;
}

.hamburger span {
    height: 4px;
    background: #7f8087;
}

.topbar-right {
    margin-left: auto;
    display: flex;
    align-items: center;
}

.btn-support {
    height: 60px;
    width: 243px;
    display: flex;
    align-items: center;
    padding-left: 24px;
    background: #3f6ad8;
    color: #fff;
    border-radius: 8px;
    font-size: 26px;
    margin-top: -3px;
}

.icon-support {
    width: 32px;
    height: 28px;
    margin-right: 14px;
}

.user-menu {
    display: flex;
    align-items: center;
    margin-left: 65px;
    color: #7c8088;
    letter-spacing: -0.48px;
}

.icon-user {
    width: 27px;
    height: 28px;
    margin-right: 16px;
}

.chev-user {
    width: 23px;
    height: 16px;
    margin-left: 19px;
    margin-top: -6px;
    color: #6e7079;
}

/* page grid */
.layout {
    display: flex;
    height: 2888px;
}

/* sidebar */
.sidebar {
    width: 513px;
    flex: none;
    display: flex;
    flex-direction: column;
    background: #3c4a62;
    color: #d5d9df;
    padding-top: 16px;
}

.btn-add-docs {
    margin: 0 33px 0 32px;
    height: 56px;
    display: flex;
    align-items: center;
    justify-content: center;
    padding-left: 10px;
    background: #3f6ad8;
    color: #fff;
    border-radius: 6px;
    font-size: 24px;
    flex: none;
}

.btn-add-docs .caret {
    border-top-width: 6px;
    border-left-width: 6px;
    border-right-width: 6px;
    margin-left: 4px;
}

.icon-plus-sm {
    width: 21px;
    height: 24px;
    margin-right: 18px;
}

.side-label {
    height: 36px;
    line-height: 36px;
    margin: 54px 32px 24px;
    font-size: 21px;
    font-weight: 700;
    letter-spacing: 1.2px;
    color: #a4acb9;
    flex: none;
}

.side-label-first {
    margin-top: 70px;
    margin-bottom: 28px;
}

.side-item {
    height: 96px;
    display: flex;
    align-items: center;
    padding-left: 112px;
    position: relative;
    flex: none;
    letter-spacing: -0.3px;
}

.side-item-first {
    height: 92px;
}

.side-icon {
    position: absolute;
    left: 38px;
    width: 36px;
    height: 32px;
    color: #9aa3b1;
}

.side-icon-lg {
    left: 37px;
    width: 38px;
    height: 36px;
}

.side-recent {
    background: #2f3b4f;
    height: 176px;
    flex: none;
}

.side-item-open {
    height: 100px;
    color: #fff;
}

.side-chev {
    position: absolute;
    right: 33px;
    width: 16px;
    height: 12px;
    color: #9aa3b1;
}

.side-sub {
    padding-left: 53px;
    height: 70px;
    line-height: 70px;
    font-size: 26px;
    font-weight: 500;
    color: #fff;
}

.badge-money {
    position: absolute;
    right: 33px;
    width: 60px;
    height: 32px;
    line-height: 32px;
    text-align: center;
    border-radius: 8px;
    background: #2db35d;
    color: #fff;
    font-family: "Liberation Sans", sans-serif;
    font-size: 22px;
    font-weight: 700;
    letter-spacing: 1.5px;
}

.plan {
    margin-top: auto;
    padding: 0 65px 0 32px;
    color: #fff;
}

.plan-name {
    font-size: 40px;
    line-height: 52px;
    white-space: nowrap;
}

.plan-pages {
    font-size: 28px;
    line-height: 40px;
    margin-top: 17px;
}

.plan-left {
    font-size: 28px;
    line-height: 40px;
    margin-top: 18px;
}

.plan-bar {
    height: 32px;
    margin-top: 15px;
    background: #e75454;
    border-radius: 8px;
}

.side-footer {
    height: 100px;
    flex: none;
    background: #2f3a52;
    display: flex;
    align-items: center;
    justify-content: flex-end;
    padding-right: 42px;
    color: #8c95a5;
}

.side-collapse {
    width: 17px;
    height: 30px;
}

.side-collapse polyline {
    stroke-width: 5;
}

/* main column */
.main {
    flex: 1;
    min-width: 0;
    display: flex;
    flex-direction: column;
}

.crumbs {
    height: 98px;
    padding: 4px 0 0 42px;
    display: flex;
    align-items: center;
    background: #fff;
    border-bottom: 2px solid #dcdfe3;
    color: #7d8592;
}

.crumb-link {
    color: #3f6ad8;
}

.crumb-sep {
    margin: 0 15px;
    color: #8c93a0;
}

.card {
    height: 2716px;
    margin: 18px 32px 0 30px;
    display: flex;
    background: #fff;
    border: 2px solid #e1e3e7;
    border-radius: 8px;
    box-shadow: 0 4px 14px rgba(30, 40, 70, 0.12);
    overflow: hidden;
}

/* project tree */
.tree-pane {
    width: 559px;
    flex: none;
    display: flex;
    flex-direction: column;
    background: #f8f9fb;
    border-right: 2px solid #dfe1e6;
}

.tree-head {
    height: 167px;
    flex: none;
    padding: 14px 0 0 15px;
    background: #fff;
    border-bottom: 2px solid #dfe1e6;
}

.tree-actions {
    display: flex;
    justify-content: space-between;
    height: 56px;
}

.btn-add-folder {
    width: 210px;
    display: flex;
    align-items: center;
    padding-left: 32px;
    border: 2px solid #3f6ad8;
    border-radius: 6px;
    background: #fff;
    color: #3f6ad8;
    font-size: 24px;
}

.btn-collapse {
    width: 49px;
    display: flex;
    align-items: center;
    justify-content: center;
    background: #ebecee;
    border: 2px solid #dcdfe3;
    border-right: 0;
    color: #3b4658;
}

.btn-collapse svg {
    width: 14px;
    height: 24px;
}

.search-group {
    display: flex;
    margin-top: 16px;
    height: 64px;
    padding-right: 17px;
}

.search-addon {
    width: 78px;
    margin-right: 3px;
    display: flex;
    align-items: center;
    justify-content: center;
    border: 2px solid #dfe1e6;
    border-radius: 8px 0 0 8px;
    color: #6a7382;
}

.search-addon svg {
    width: 28px;
    height: 28px;
}

.search-input {
    flex: 1;
    min-width: 0;
    padding: 3px 0 0 16px;
    border: 2px solid #dfe1e6;
    border-radius: 0 8px 8px 0;
    font: inherit;
    outline: none;
}

.search-input::placeholder {
    color: #8b92a0;
}

.tree-body {
    flex: 1;
    padding-top: 20px;
}

.tree-folder {
    height: 73px;
    display: flex;
    align-items: center;
    padding: 0 0 4px 59px;
    position: relative;
}

.tree-chev {
    width: 20px;
    height: 14px;
    color: #4a5568;
    margin-right: 38px;
    margin-top: -6px;
}

.tree-folder-icon {
    width: 31px;
    height: 31px;
    color: #fcb022;
    margin-right: 17px;
    margin-top: -4px;
}

.tree-name {
    color: #5d6778;
    letter-spacing: -0.15px;
}

.tree-gear,
.tree-trash {
    position: absolute;
    height: 24px;
    margin-top: -4px;
}

.tree-gear {
    width: 24px;
    color: #c4c8cf;
}

.tree-trash {
    width: 21px;
    color: #e65555;
}

.tree-folder .tree-gear {
    left: 449px;
}

.tree-folder .tree-trash {
    left: 493px;
}

.tree-row .tree-gear {
    left: 414px;
}

.tree-row .tree-trash {
    left: 457px;
}

.tree-list {
    margin-left: 41px;
    border-left: 2px solid #e6e8ec;
    border-bottom: 2px solid #e6e8ec;
    border-top: 2px solid #e6e8ec;
}

.tree-row {
    height: 74px;
    display: flex;
    align-items: center;
    padding-left: 36px;
    position: relative;
}

.tree-row-active {
    background: #d7e7f8;
    border-left: 6px solid #0d6efd;
    margin-left: -2px;
    padding-left: 32px;
}

.tree-row-active .tree-gear {
    left: 408px;
}

.tree-row-active .tree-trash {
    left: 451px;
}

.tree-open-icon {
    width: 32px;
    height: 26px;
    color: #3a94fb;
    margin-right: 16px;
}

.tree-add {
    color: #0d72ef;
    padding-left: 33px;
    letter-spacing: -0.3px;
}

.tree-add-icon {
    width: 26px;
    height: 30px;
    margin-right: 20px;
}

/* right side */
.work-pane {
    flex: 1;
    min-width: 0;
    padding: 46px 46px 0 48px;
    display: flex;
    flex-direction: column;
}

.project-bar {
    height: 108px;
    flex: none;
    display: flex;
    align-items: center;
    padding-left: 33px;
    background: #ebecee;
    border: 2px solid #dfe1e5;
    border-radius: 8px;
}

.path {
    font-size: 22.4px;
    color: #727b89;
}

.path-sep {
    width: 8px;
    height: 14px;
    margin: 0 10px;
    color: #727b89;
}

.path-sep polyline {
    stroke-width: 1.5;
}

.project-name {
    font-size: 32px;
    font-weight: 600;
    color: #5a6577;
    margin-left: 2px;
}

.project-gear {
    width: 23px;
    height: 26px;
    margin-left: 28px;
    margin-top: -6px;
    color: #6b7584;
}

.project-trash {
    width: 21px;
    height: 25px;
    margin-left: 20px;
    margin-top: -6px;
    color: #e65555;
}

.btn-upload {
    margin-left: auto;
    width: 239px;
    height: 71px;
    display: flex;
    align-items: center;
    padding-left: 44px;
    border: 2px solid #3f6ad8;
    border-radius: 6px;
    box-shadow: 0 0 0 9px #b5d3f3;
    background: #f0f1f3;
    color: #3f6ad8;
    font-weight: 600;
}

.icon-plus-md {
    width: 26px;
    height: 30px;
    margin-right: 15px;
}

.bar-link {
    display: flex;
    align-items: center;
    color: #3f6ad8;
}

.bar-tour {
    margin-left: 43px;
}

.bar-report {
    margin-left: 72px;
}

.icon-play {
    width: 26px;
    height: 30px;
    margin-right: 7px;
}

.icon-warn {
    width: 33px;
    height: 30px;
    margin-right: 13px;
}

.btn-download {
    margin-left: 88px;
    margin-right: 32px;
    width: 296px;
    height: 72px;
    display: flex;
    align-items: center;
    justify-content: center;
    background: #3f6ad8;
    color: #fff;
    border-radius: 6px;
}

.icon-dl {
    width: 30px;
    height: 30px;
    margin-right: 8px;
}

.tabs {
    display: flex;
    height: 123px;
    flex: none;
    padding-top: 36px;
    border-bottom: 2px solid #dfe1e5;
}

.tab {
    height: 71px;
    display: flex;
    align-items: center;
    padding: 0 28px 3px;
    color: #495363;
    border-bottom: 4px solid transparent;
}

.tab-first {
    padding-left: 25px;
    letter-spacing: -0.25px;
}

.tab-active {
    padding-right: 24px;
    color: #3f6ad8;
    font-weight: 500;
    letter-spacing: 0.4px;
    border-bottom-color: #3f6ad8;
}

.tab-icon {
    height: 27px;
    margin-right: 16px;
    margin-left: 14px;
}

.icon-bank {
    width: 28px;
    margin-left: 0;
}

.icon-file {
    width: 23px;
}

.icon-chart {
    width: 29px;
}

.subtabs {
    height: 81px;
    flex: none;
    display: flex;
    align-items: center;
    gap: 82px;
    padding: 36px 0 0 53px;
    border-bottom: 2px solid #dfe1e5;
    font-size: 24px;
}

.subtab {
    display: flex;
    align-items: center;
    color: #495363;
}

.subtab-active {
    color: #3f6ad8;
    font-weight: 500;
}

.subtab svg {
    height: 26px;
}

.sub-file {
    width: 22px;
    margin-right: 21px;
}

.sub-chart {
    width: 28px;
    margin-right: 20px;
}

.sub-folder {
    width: 33px;
    margin-right: 16px;
}

.back-link {
    height: 84px;
    flex: none;
    display: flex;
    align-items: center;
    padding: 26px 0 0 48px;
    font-size: 24px;
    color: #6d7684;
}

.back-link svg {
    width: 22px;
    height: 22px;
    margin-right: 8px;
}

.split {
    flex: 1;
    min-height: 0;
    display: flex;
}

.pdf-col {
    width: 1046px;
    flex: none;
    display: flex;
    flex-direction: column;
}

.btn-hide-pdf {
    align-self: flex-end;
    margin-right: 1px;
    width: 162px;
    height: 47px;
    flex: none;
    display: flex;
    align-items: center;
    justify-content: center;
    gap: 6px;
    background: #fff;
    border: 2px solid #dfe1e5;
    border-radius: 6px;
    font-size: 24px;
    color: #6d7684;
}

.btn-hide-pdf svg {
    width: 12px;
    height: 22px;
    color: #495363;
}

.pdf-viewer {
    flex: 1;
    min-height: 0;
    margin: 9px 38px 0 78px;
    background: #525659;
    overflow: hidden;
}

.pdf-toolbar {
    height: 72px;
    display: flex;
    align-items: center;
    padding: 0 17px;
    background: #323639;
    box-shadow: 0 2px 8px rgba(0, 0, 0, 0.3);
}

.pdf-nav,
.pdf-tools {
    height: 54px;
    display: flex;
    border: 2px solid #73777a;
    border-radius: 6px;
}

.pdf-tools {
    border-color: #f1f1f1;
}

.pdf-nav-btn {
    width: 48px;
    display: flex;
    align-items: center;
    justify-content: center;
    color: #9da0a3;
}

.pdf-nav-btn + .pdf-nav-btn {
    width: 47px;
    border-left: 2px solid #73777a;
}

.pdf-nav-btn svg {
    width: 12px;
    height: 22px;
}

.pdf-page-no {
    flex: 1;
    text-align: center;
    color: #f1f1f1;
    font-size: 24px;
}

.pdf-tool {
    width: 58px;
    display: flex;
    align-items: center;
    justify-content: center;
    color: #f1f1f1;
}

.pdf-tool + .pdf-tool {
    border-left: 2px solid #f1f1f1;
}

.pdf-tool svg {
    width: 25px;
    height: 25px;
}

/* the invoice drawn on the page */
.pdf-page {
    width: 882px;
    height: 1140px;
    margin: 24px auto 0;
    padding: 60px 60px 0;
    background: #fff;
    box-shadow: 0 0 10px rgba(0, 0, 0, 0.35);
    font-family: "Liberation Sans", sans-serif;
    font-size: 12px;
    color: #444;
}

.inv-head {
    display: flex;
    justify-content: space-between;
    height: 102px;
    padding-right: 2px;
}

.inv-company {
    font-size: 17.4px;
    line-height: 24px;
    font-weight: 700;
    color: #2c3e50;
}

.inv-address {
    font-size: 14px;
    line-height: 22px;
    margin-top: 1px;
    color: #555;
}

.inv-title {
    font-size: 40px;
    line-height: 46px;
    font-weight: 700;
    letter-spacing: 2.4px;
    color: #2c3e50;
}

.inv-meta {
    height: 58px;
    display: grid;
    grid-template-columns: 94px 157px 130px 120px 98px auto;
    align-items: center;
    padding-left: 22px;
    background: #f8f9fa;
    border-radius: 6px;
    font-size: 13.2px;
    color: #333;
}

.inv-meta-label {
    color: #888;
}

.inv-billto {
    margin-top: 24px;
    font-size: 13px;
    line-height: 18px;
    font-weight: 700;
    letter-spacing: 1px;
    color: #777;
}

.inv-client {
    margin-top: 7px;
    font-size: 14.2px;
    line-height: 16px;
    color: #555;
}

.inv-client strong {
    color: #333;
}

.inv-table {
    width: 762px;
    margin-top: 19px;
    table-layout: fixed;
    border-collapse: collapse;
}

.inv-table th {
    height: 33px;
    padding: 0 9px;
    background: #2c3e50;
    border-left: 1px solid #5a6a7a;
    color: #f2f2f2;
    text-align: left;
    font-size: 13.4px;
}

.inv-table th:first-child {
    border-left: 0;
}

.col-desc {
    width: 401px;
}

.col-qty {
    width: 72px;
}

.col-unit {
    width: 144px;
}

.inv-table td {
    height: 37px;
    padding: 0 9px;
    border-bottom: 1px solid #f2f3f4;
    font-size: 14px;
}

.inv-table .num {
    text-align: right;
}

.inv-totals {
    width: 290px;
    margin: 15px 0 0 465px;
    font-size: 13.6px;
}

.inv-total-row {
    display: flex;
    justify-content: space-between;
    height: 30px;
    align-items: center;
}

.inv-total-due {
    height: 36px;
    font-size: 18.6px;
    font-weight: 700;
    color: #2c3e50;
}

/* splitter */
.splitter {
    width: 20px;
    flex: none;
    background: #ededed;
    padding: 1498px 0 0 4px;
}

.splitter-grip {
    width: 10px;
    height: 62px;
    background-image:
        repeating-linear-gradient(90deg, transparent 0 4px, #ededed 4px 6px),
        repeating-linear-gradient(180deg, #c8c8c8 0 4px, transparent 4px 8px);
}

/* details column */
.detail-col {
    flex: 1;
    min-width: 0;
}

.export-box {
    width: 1457px;
    height: 195px;
    margin-left: 8px;
    padding: 20px 16px 0;
    background: #f8f9fe;
    border-bottom: 2px solid #dfe7f5;
}

.export-title {
    display: flex;
    align-items: center;
    height: 44px;
}

.icon-cloud {
    width: 32px;
    height: 26px;
    color: #3f6ad8;
    margin-right: 8px;
}

.export-title strong {
    font-size: 26.4px;
    font-weight: 600;
    color: #3f6ad8;
}

.export-note {
    margin-left: 25px;
    font-size: 22.4px;
    color: #7d8592;
}

.export-status {
    margin-top: 17px;
    font-size: 22.4px;
    line-height: 30px;
    color: #7d8592;
}

.export-actions {
    display: flex;
    gap: 16px;
    margin-top: 10px;
}

.btn-outline {
    height: 55px;
    display: flex;
    align-items: center;
    justify-content: center;
    border: 2px solid #3f6ad8;
    border-radius: 6px;
    color: #3f6ad8;
    font-size: 24px;
}

.btn-connect {
    width: 166px;
}

.btn-excel {
    width: 122px;
}

.btn-more {
    width: 45px;
    flex-direction: column;
    gap: 4px;
}

.btn-more span {
    width: 6px;
    height: 6px;
    border-radius: 50%;
    background: #3f6ad8;
}

.icon-sync {
    width: 24px;
    height: 26px;
    margin-right: 8px;
}

.icon-excel {
    width: 19px;
    height: 25px;
    margin-right: 8px;
}

.detail-tabs {
    display: flex;
    height: 78px;
    margin: 15px 0 0 -12px;
    padding-left: 17px;
    width: 1497px;
    border-bottom: 2px solid #bfc5cc;
    position: relative;
}

.detail-tab {
    height: 78px;
    display: flex;
    align-items: center;
    padding: 0 34.5px;
    font-size: 27px;
    color: #3f6ad8;
}

.detail-tab-active {
    width: 154px;
    margin-right: 2px;
    justify-content: center;
    padding: 0;
    background: #ebecee;
    border: 2px solid #cdd1d6;
    border-bottom: 0;
    border-radius: 8px 8px 0 0;
    color: #7a8494;
}

.detail-form {
    width: 1455px;
    margin-left: 8px;
    padding-top: 32px;
}

.badge-match {
    width: 198px;
    height: 36px;
    display: flex;
    align-items: center;
    padding-left: 7px;
    background: #2db35d;
    border-radius: 6px;
    color: #fff;
    font-size: 22px;
    font-weight: 600;
}

.badge-match svg {
    width: 22px;
    height: 20px;
    margin-right: 14px;
}

.field-label {
    display: block;
    height: 36px;
    line-height: 36px;
    margin-top: 37px;
    margin-bottom: 18px;
    font-weight: 600;
    color: #5a6578;
}

.field-label-first {
    margin-top: 21px;
}

.field {
    display: block;
    width: 100%;
    height: 69px;
    padding: 2px 24px 0;
    border: 2px solid #dfe1e6;
    border-radius: 8px;
    background: #fff;
    font: inherit;
    letter-spacing: -0.5px;
    color: #727b89;
    outline: none;
}

.field-num {
    padding-right: 8px;
}

select.field {
    appearance: none;
    padding-left: 32px;
    height: 68px;
    background: #fff url("data:image/svg+xml,%3Csvg xmlns='http://www.w3.org/2000/svg' viewBox='0 0 18 12'%3E%3Cpolyline points='2,2 9,9 16,2' fill='none' stroke='%23505b6b' stroke-width='4'/%3E%3C/svg%3E") no-repeat right 8px center / 18px 12px;
}

.field-row {
    display: grid;
    gap: 60px;
}

.field-row-3 {
    grid-template-columns: repeat(3, 1fr);
}

.field-row-4 {
    grid-template-columns: repeat(4, 1fr);
}

.form-rule {
    width: 1486px;
    margin-top: 48px;
    border: 0;
    border-top: 2px solid #dfe1e6;
}

.line-title {
    margin-top: 32px;
    height: 30px;
    line-height: 30px;
    font-size: 22px;
    font-weight: 500;
    letter-spacing: 1.4px;
    color: #727b89;
}

.line-grid {
    display: grid;
    grid-template-columns: 259px 244px 238px 158px 178px 158px 138px 79px;
    column-gap: 2px;
    width: 1480px;
}

.line-head {
    margin-top: 21px;
    height: 38px;
    line-height: 36px;
    font-size: 26px;
    font-weight: 600;
    color: #5a6578;
    white-space: nowrap;
}

.line-row {
    margin-bottom: 33px;
    align-items: center;
}

.line-trash {
    width: 23px;
    height: 27px;
    margin-left: 26px;
    color: #3f6ad8;
}

.add-line {
    display: flex;
    align-items: center;
    margin: 52px 0 0 26px;
    color: #3f6ad8;
    letter-spacing: -0.35px;
}

.add-line svg {
    width: 24px;
    height: 28px;
    margin-right: 10px;
}
```
